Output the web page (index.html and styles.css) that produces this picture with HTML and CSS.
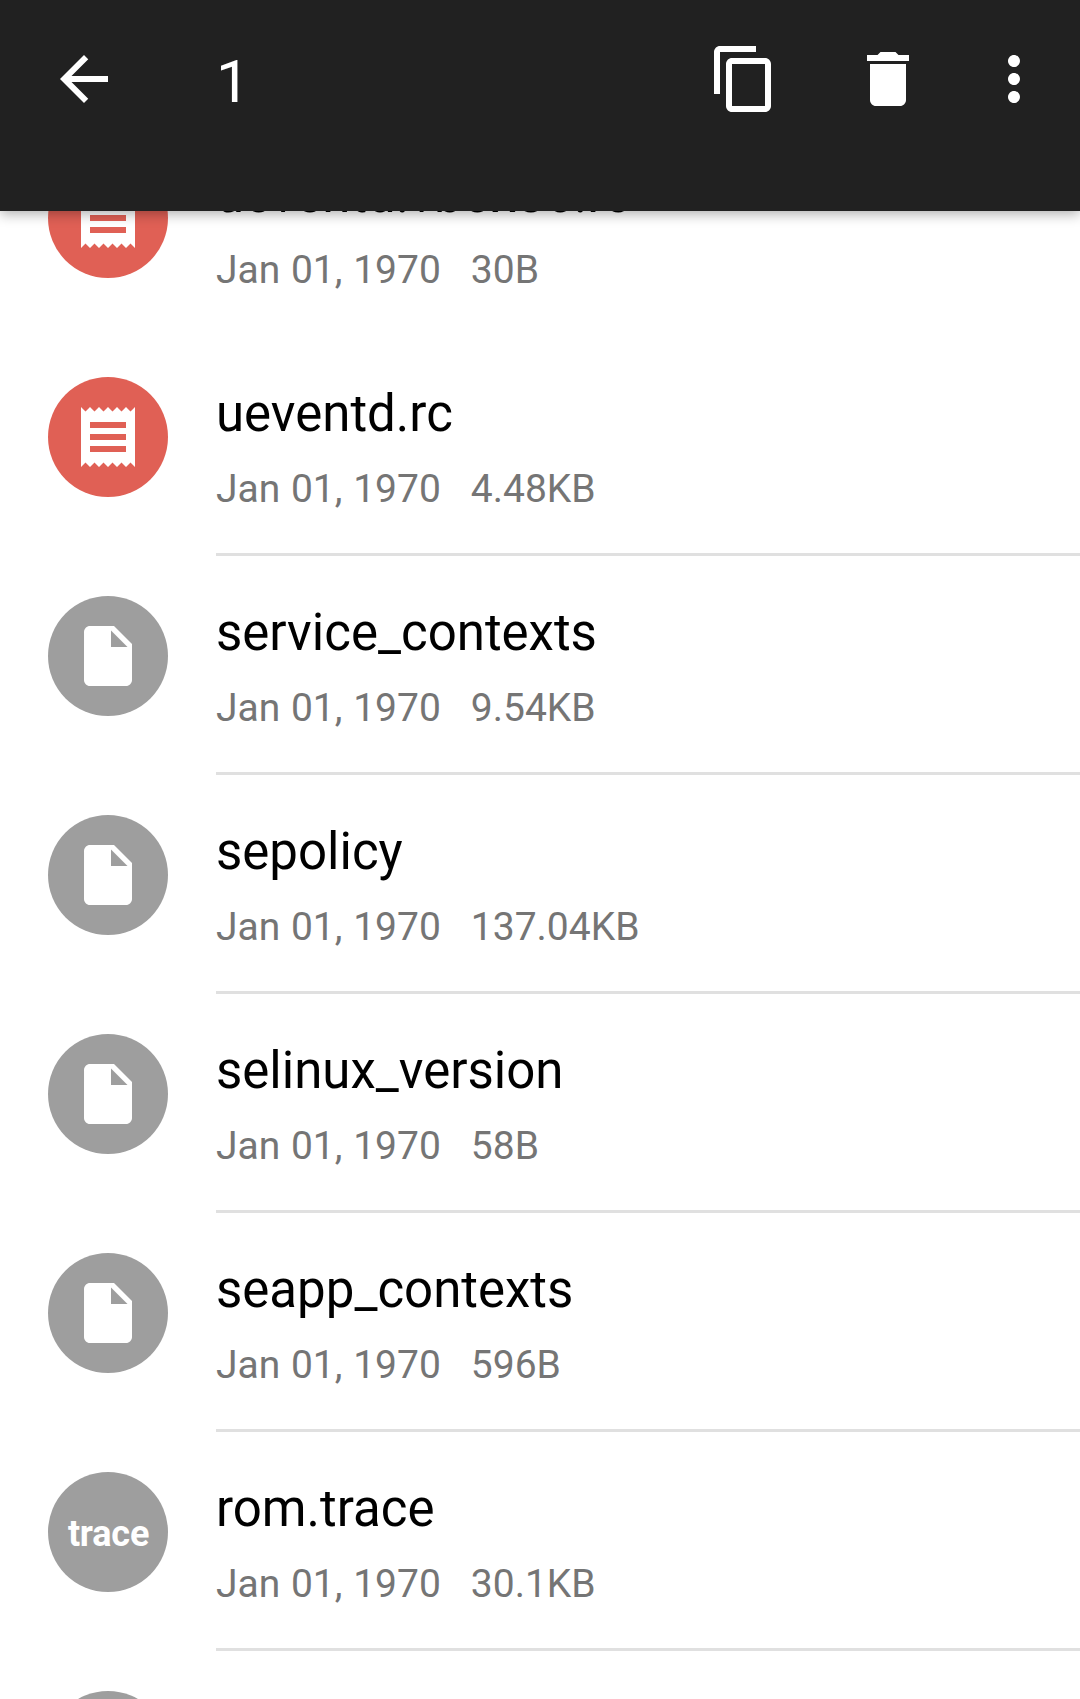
FILE: index.html
```html
<!DOCTYPE html>
<html lang="en">
<head>
<meta charset="utf-8">
<title>Files</title>
<link rel="stylesheet" href="styles.css">
</head>
<body>
<svg class="defs" aria-hidden="true">
  <symbol id="receipt" viewBox="0 0 24 24"><path d="M18 17H6v-2h12v2zm0-4H6v-2h12v2zm0-4H6V7h12v2zM3 22l1.5-1.5L6 22l1.5-1.5L9 22l1.5-1.5L12 22l1.5-1.5L15 22l1.5-1.5L18 22l1.5-1.5L21 22V2l-1.500 1.500L18 2l-1.500 1.500L15 2l-1.500 1.500L12 2l-1.500 1.500L9 2 7.500 3.500 6 2 4.500 3.500 3 2v20z"/></symbol>
  <symbol id="file" viewBox="0 0 24 24"><path d="M6 2c-1.100 0-1.990.9-1.990 2L4 20c0 1.100.890 2 1.990 2H18c1.100 0 2-.9 2-2V8l-6-6H6zm7 7V3.500L18.500 9H13z"/></symbol>
</svg>
<header class="bar">
  <svg class="icon back" viewBox="0 0 24 24"><path d="M20 11H7.830l5.590-5.590L12 4l-8 8 8 8 1.410-1.410L7.830 13H20v-2z"/></svg>
  <span class="count">1</span>
  <svg class="icon copy" viewBox="0 0 24 24"><path d="M16 1H4c-1.100 0-2 .9-2 2v14h2V3h12V1zm3 4H8c-1.100 0-2 .9-2 2v14c0 1.100.9 2 2 2h11c1.100 0 2-.9 2-2V7c0-1.100-.9-2-2-2zm0 16H8V7h11v14z"/></svg>
  <svg class="icon trash" viewBox="0 0 24 24"><path d="M6 19c0 1.100.9 2 2 2h8c1.100 0 2-.9 2-2V7H6v12zM19 4h-3.500l-1-1h-5l-1 1H5v2h14V4z"/></svg>
  <svg class="icon more" viewBox="0 0 24 24"><path d="M12 8c1.100 0 2-.9 2-2s-.9-2-2-2-2 .9-2 2 .9 2 2 2zm0 2c-1.100 0-2 .9-2 2s.9 2 2 2 2-.9 2-2-.9-2-2-2zm0 6c-1.100 0-2 .9-2 2s.9 2 2 2 2-.9 2-2-.9-2-2-2z"/></svg>
</header>
<main class="list">
  <div class="row plain"><div class="avatar red"><svg class="glyph"><use href="#receipt"/></svg></div><div class="info"><div class="name">ueventd.vbox86.rc</div><div class="meta"><span>Jan 01, 1970</span><span>30B</span></div></div></div>
  <div class="row"><div class="avatar red"><svg class="glyph"><use href="#receipt"/></svg></div><div class="info"><div class="name">ueventd.rc</div><div class="meta"><span>Jan 01, 1970</span><span>4.48KB</span></div></div></div>
  <div class="row"><div class="avatar"><svg class="glyph"><use href="#file"/></svg></div><div class="info"><div class="name">service_contexts</div><div class="meta"><span>Jan 01, 1970</span><span>9.54KB</span></div></div></div>
  <div class="row"><div class="avatar"><svg class="glyph"><use href="#file"/></svg></div><div class="info"><div class="name">sepolicy</div><div class="meta"><span>Jan 01, 1970</span><span>137.04KB</span></div></div></div>
  <div class="row"><div class="avatar"><svg class="glyph"><use href="#file"/></svg></div><div class="info"><div class="name">selinux_version</div><div class="meta"><span>Jan 01, 1970</span><span>58B</span></div></div></div>
  <div class="row"><div class="avatar"><svg class="glyph"><use href="#file"/></svg></div><div class="info"><div class="name">seapp_contexts</div><div class="meta"><span>Jan 01, 1970</span><span>596B</span></div></div></div>
  <div class="row"><div class="avatar"><span class="ext">trace</span></div><div class="info"><div class="name">rom.trace</div><div class="meta"><span>Jan 01, 1970</span><span>30.1KB</span></div></div></div>
  <div class="row last"><div class="avatar"></div></div>
</main>
</body>
</html>
```

FILE: styles.css
```css
* { box-sizing: border-box; }
body {
  margin: 0;
  height: 1699px;
  overflow: hidden;
  background: #fff;
  font-family: Roboto, "Liberation Sans", sans-serif;
}
.defs { display: none; }
.bar {
  position: relative;
  z-index: 1;
  display: flex;
  align-items: flex-start;
  height: 211px;
  padding: 43px 30px 0 48px;
  background: #212121;
  color: #fff;
  box-shadow: 0 3px 12px rgba(0, 0, 0, .32);
}
.icon { flex: none; width: 72px; height: 72px; fill: currentColor; }
.count { width: 492px; margin-left: 96px; font-size: 60px; line-height: 78px; }
.trash { margin-left: 72px; }
.more { margin-left: 54px; }
/* The list is scrolled so its first row sits partly under the bar. */
.list { height: 1581px; margin-top: -93px; overflow: hidden; }
.row {
  display: flex;
  height: 219px;
  padding: 40px 0 0 48px;
}
.last { height: 48px; overflow: hidden; }
.avatar {
  flex: none;
  display: flex;
  align-items: center;
  justify-content: center;
  width: 120px;
  height: 120px;
  border-radius: 50%;
  background: #9e9e9e;
  color: #fff;
}
.red { background: #e06055; }
.glyph { width: 72px; height: 72px; fill: currentColor; }
.ext { padding: 4px 0 0 1px; font-size: 36px; font-weight: 700; line-height: 42px; letter-spacing: -.2px; }
.info {
  flex: 1;
  height: 179px;
  margin-left: 48px;
  border-bottom: 3px solid #e0e0e0;
}
.plain .info { border-bottom-color: transparent; }
.name { padding-top: 7px; font-size: 51px; line-height: 60px; color: #000; }
.meta {
  display: flex;
  gap: 30px;
  margin-top: 21px;
  font-size: 39px;
  line-height: 48px;
  word-spacing: 1px;
  color: #757575;
}
```
